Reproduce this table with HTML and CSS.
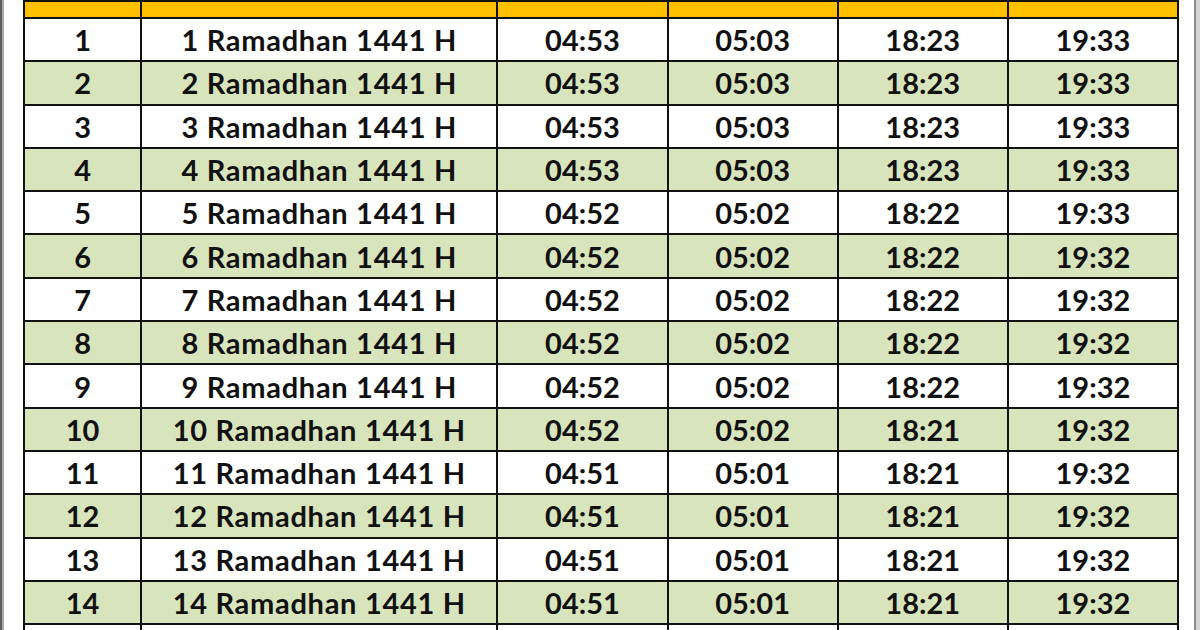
FILE: index.html
```html
<!DOCTYPE html>
<html lang="id">
<head>
<meta charset="utf-8">
<title>Jadwal Imsakiyah Ramadhan 1441 H</title>
<link rel="stylesheet" href="styles.css">
</head>
<body>
<div class="sheet">
  <div class="edge-left"></div>
  <div class="page">
    <table class="schedule">
      <colgroup>
        <col class="c-no"><col class="c-date"><col class="c-t"><col class="c-t"><col class="c-t"><col class="c-t">
      </colgroup>
      <thead>
        <tr class="head"><th></th><th></th><th></th><th></th><th></th><th></th></tr>
      </thead>
      <tbody>
        <tr><td>1</td><td class="date">1 Ramadhan 1441 H</td><td>04:53</td><td>05:03</td><td>18:23</td><td>19:33</td></tr>
        <tr class="alt"><td>2</td><td class="date">2 Ramadhan 1441 H</td><td>04:53</td><td>05:03</td><td>18:23</td><td>19:33</td></tr>
        <tr><td>3</td><td class="date">3 Ramadhan 1441 H</td><td>04:53</td><td>05:03</td><td>18:23</td><td>19:33</td></tr>
        <tr class="alt"><td>4</td><td class="date">4 Ramadhan 1441 H</td><td>04:53</td><td>05:03</td><td>18:23</td><td>19:33</td></tr>
        <tr><td>5</td><td class="date">5 Ramadhan 1441 H</td><td>04:52</td><td>05:02</td><td>18:22</td><td>19:33</td></tr>
        <tr class="alt"><td>6</td><td class="date">6 Ramadhan 1441 H</td><td>04:52</td><td>05:02</td><td>18:22</td><td>19:32</td></tr>
        <tr><td>7</td><td class="date">7 Ramadhan 1441 H</td><td>04:52</td><td>05:02</td><td>18:22</td><td>19:32</td></tr>
        <tr class="alt"><td>8</td><td class="date">8 Ramadhan 1441 H</td><td>04:52</td><td>05:02</td><td>18:22</td><td>19:32</td></tr>
        <tr><td>9</td><td class="date">9 Ramadhan 1441 H</td><td>04:52</td><td>05:02</td><td>18:22</td><td>19:32</td></tr>
        <tr class="alt"><td>10</td><td class="date">10 Ramadhan 1441 H</td><td>04:52</td><td>05:02</td><td>18:21</td><td>19:32</td></tr>
        <tr><td>11</td><td class="date">11 Ramadhan 1441 H</td><td>04:51</td><td>05:01</td><td>18:21</td><td>19:32</td></tr>
        <tr class="alt"><td>12</td><td class="date">12 Ramadhan 1441 H</td><td>04:51</td><td>05:01</td><td>18:21</td><td>19:32</td></tr>
        <tr><td>13</td><td class="date">13 Ramadhan 1441 H</td><td>04:51</td><td>05:01</td><td>18:21</td><td>19:32</td></tr>
        <tr class="alt"><td>14</td><td class="date">14 Ramadhan 1441 H</td><td>04:51</td><td>05:01</td><td>18:21</td><td>19:32</td></tr>
        <tr class="cut"><td></td><td></td><td></td><td></td><td></td><td></td></tr>
      </tbody>
    </table>
  </div>
  <div class="edge-right"></div>
</div>
</body>
</html>
```

FILE: styles.css
```css
html, body {
  margin: 0;
  padding: 0;
  background: #ffffff;
  overflow: hidden;
}

.sheet {
  display: flex;
  width: 1200px;
  height: 630px;
  overflow: hidden;
}

.edge-left {
  flex: 0 0 4px;
  background: linear-gradient(to right, #5c5c5c 0, #5c5c5c 2px, #a8a8a8 2px, #a8a8a8 4px);
}

.page {
  flex: 0 0 1190px;
  padding-left: 19px;
  box-sizing: border-box;
  background: #ffffff;
}

.edge-right {
  flex: 0 0 6px;
  background: linear-gradient(to right, #8a8a8a 0, #8a8a8a 2px, #d6d6d6 2px);
}

.schedule {
  border-collapse: collapse;
  table-layout: fixed;
  width: 1156px;
  font-family: "Lato", "Open Sans", sans-serif;
  font-weight: 700;
  color: #111111;
}

.c-no { width: 117px; }
.c-date { width: 356px; }
.c-t { width: 170px; }

.schedule th,
.schedule td {
  border: 2px solid #111111;
  text-align: center;
  padding: 0;
}

.head th {
  background: #ffc000;
  height: 15px;
}

.schedule td {
  height: 41.3px;
  font-size: 29px;
  line-height: 1;
}

.schedule td.date {
  letter-spacing: 0.7px;
}

.schedule tr.alt td {
  background: #d8e4bc;
}
```
